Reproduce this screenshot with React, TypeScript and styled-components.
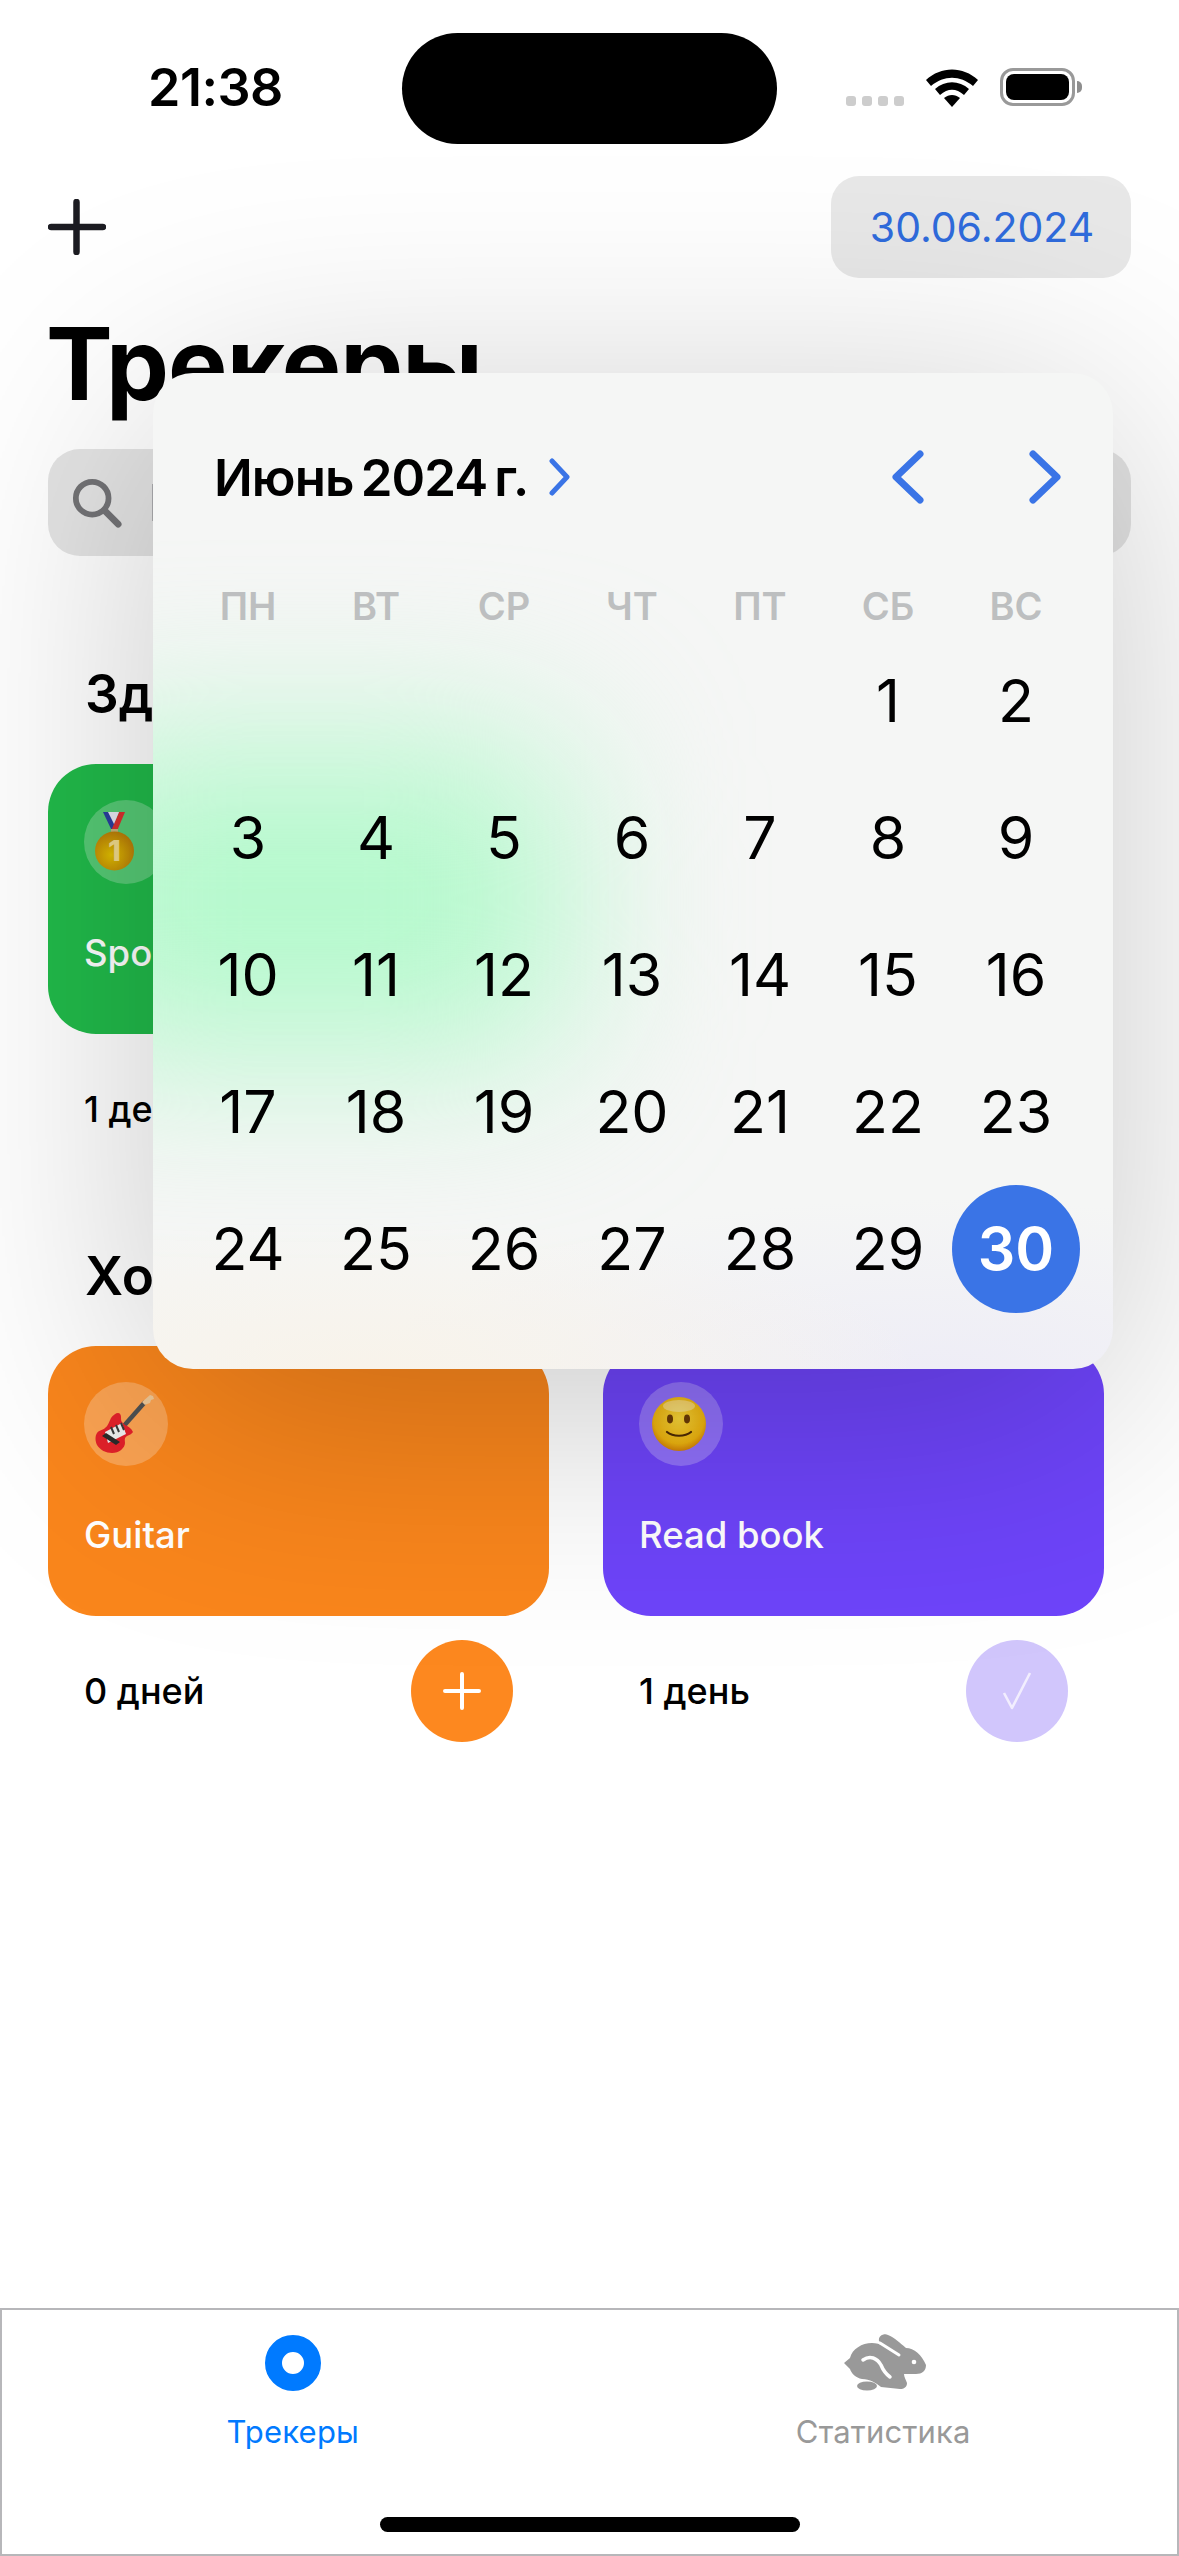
import React from "react";
import styled, { createGlobalStyle } from "styled-components";

const Global = createGlobalStyle`
  html, body { margin: 0; padding: 0; background: #fff; }
  * { box-sizing: border-box; }
`;

const Page = styled.div`
  position: relative;
  width: 1179px;
  height: 2556px;
  overflow: hidden;
  display: flex;
  flex-direction: column;
  background: #fff;
  color: #000;
  font-family: Inter, "Liberation Sans", sans-serif;
`;

const StatusBar = styled.div`
  height: 176px;
  display: grid;
  grid-template-columns: 402px 375px 1fr;
  align-items: start;
`;
const Time = styled.div`
  padding: 58px 0 0 148px;
  font-size: 52px;
  line-height: 60px;
  font-weight: 600;
  letter-spacing: -0.5px;
`;
const Island = styled.div`
  margin-top: 33px;
  height: 111px;
  border-radius: 56px;
  background: #000;
`;
const StatusIcons = styled.div`
  display: flex;
  align-items: flex-start;
  padding: 68px 0 0 69px;
`;
const Dots = styled.div`
  display: flex;
  gap: 6px;
  margin-top: 28px;
`;
const Dot = styled.span`
  width: 10px;
  height: 10px;
  border-radius: 3px;
  background: #cdcdcd;
`;
const Wifi = styled.svg`
  width: 52px;
  height: 38px;
  margin: 1px 0 0 22px;
`;
const Battery = styled.div`
  position: relative;
  width: 75px;
  height: 38px;
  margin-left: 22px;
  padding: 3px;
  border: 3px solid #999;
  border-radius: 13px;
  &::after {
    content: "";
    position: absolute;
    right: -10px;
    top: 10px;
    width: 5px;
    height: 12px;
    border-radius: 0 5px 5px 0;
    background: #8e8e8e;
  }
`;
const BatteryFill = styled.div`
  height: 100%;
  border-radius: 8px;
  background: #000;
`;

const TopRow = styled.div`
  display: flex;
  justify-content: space-between;
  align-items: center;
  padding: 0 48px;
`;
const PlusIcon = styled.svg`
  width: 58px;
  height: 56px;
  display: block;
`;
const DateChip = styled.div`
  width: 300px;
  height: 102px;
  border-radius: 28px;
  padding-left: 2px;
  background: rgba(120, 120, 120, 0.17);
  color: #2f6bdc;
  font-size: 41px;
  font-weight: 400;
  display: flex;
  align-items: center;
  justify-content: center;
`;
const Title = styled.h1`
  margin: 26px 0 0;
  padding-left: 46px;
  font-size: 100px;
  line-height: 120px;
  font-weight: 700;
  letter-spacing: -1px;
`;
const Search = styled.div`
  margin: 25px 48px 0;
  height: 107px;
  border-radius: 32px;
  background: rgba(120, 120, 120, 0.2);
  display: flex;
  align-items: center;
  gap: 26px;
  padding-left: 24px;
  color: #808085;
  font-size: 51px;
`;
const SearchIcon = styled.svg`
  width: 50px;
  height: 50px;
  flex: none;
`;
const SectionTitle = styled.h2<{ $top: number }>`
  margin: ${(p) => p.$top}px 0 40px;
  padding-left: 85px;
  font-size: 53px;
  line-height: 60px;
  font-weight: 600;
`;
const CardGrid = styled.div`
  display: grid;
  grid-template-columns: 501px 501px;
  gap: 54px;
  padding-left: 48px;
`;
const Card = styled.div<{ $color: string }>`
  height: 270px;
  border-radius: 48px;
  background: ${(p) => p.$color};
  padding: 36px;
  color: #fff;
`;
const EmojiCircle = styled.div`
  width: 84px;
  height: 84px;
  border-radius: 50%;
  background: rgba(255, 255, 255, 0.24);
`;
const EmojiSvg = styled.svg`
  display: block;
  width: 84px;
  height: 84px;
`;
const CardLabel = styled.div`
  margin-top: 47px;
  font-size: 36.5px;
  line-height: 44px;
  font-weight: 500;
`;
const CardFoot = styled.div`
  display: flex;
  justify-content: space-between;
  align-items: center;
  padding: 24px 36px 0;
  font-size: 36px;
  font-weight: 500;
`;
const RoundBtn = styled.div<{ $color: string }>`
  width: 102px;
  height: 102px;
  border-radius: 50%;
  background: ${(p) => p.$color};
  display: flex;
  align-items: center;
  justify-content: center;
`;
const BtnIcon = styled.svg`
  width: 40px;
  height: 40px;
`;

const TabBar = styled.div`
  margin-top: auto;
  height: 248px;
  border: 2px solid #b7b7ba;
  background: #fff;
  display: grid;
  grid-template-columns: 1fr 1fr;
  position: relative;
`;
const Tab = styled.div<{ $color: string; $x: number }>`
  display: flex;
  flex-direction: column;
  align-items: center;
  padding-top: 18px;
  transform: translateX(${(p) => p.$x}px);
  color: ${(p) => p.$color};
  font-size: 31px;
  letter-spacing: 0.2px;
  font-weight: 400;
`;
const TabIconBox = styled.div`
  height: 70px;
  display: flex;
  align-items: center;
  justify-content: center;
  margin-bottom: 15px;
`;
const TabDot = styled.div`
  width: 56px;
  height: 56px;
  border-radius: 50%;
  border: 17px solid #007aff;
  background: #fff;
`;
const Rabbit = styled.svg`
  width: 82px;
  height: 60px;
  margin-left: 4px;
  filter: blur(0.7px);
`;
const HomeBar = styled.div`
  position: absolute;
  left: 378px;
  bottom: 22px;
  width: 420px;
  height: 15px;
  border-radius: 8px;
  background: #000;
`;

const Popover = styled.div`
  position: absolute;
  left: 153px;
  top: 373px;
  width: 960px;
  height: 996px;
  border-radius: 40px;
  overflow: hidden;
  padding: 74px 33px 0 31px;
  background:
    radial-gradient(ellipse 560px 150px at 22% 100%, #f8f3ea, rgba(248, 243, 234, 0)),
    radial-gradient(ellipse 560px 170px at 82% 100%, #eeedf6, rgba(238, 237, 246, 0)),
    #f5f6f5;
  box-shadow: 0 40px 300px rgba(0, 0, 0, 0.22);
  &::before {
    content: "";
    position: absolute;
    left: -115px;
    top: 371px;
    width: 530px;
    height: 310px;
    border-radius: 48px;
    background: #b4f9cc;
    filter: blur(85px);
  }
`;
const CalHead = styled.div`
  position: relative;
  display: flex;
  align-items: center;
  height: 60px;
  padding: 0 18px 0 30px;
`;
const Month = styled.div`
  font-size: 51px;
  font-weight: 600;
  letter-spacing: -0.9px;
  word-spacing: -5px;
`;
const MonthChevron = styled.svg`
  width: 22px;
  height: 38px;
  margin-left: 21px;
`;
const NavGroup = styled.div`
  margin-left: auto;
  display: flex;
  gap: 105px;
`;
const NavChevron = styled.svg`
  width: 33px;
  height: 54px;
  display: block;
`;
const Week = styled.div`
  position: relative;
  display: grid;
  grid-template-columns: repeat(7, 128px);
  margin-top: 70px;
  height: 57px;
  margin-bottom: -2px;
  align-items: center;
  text-align: center;
  color: #bdbfc0;
  font-size: 38px;
  font-weight: 600;
`;
const Days = styled.div`
  position: relative;
  display: grid;
  grid-template-columns: repeat(7, 128px);
  grid-auto-rows: 137px;
`;
const Day = styled.div<{ $on?: boolean }>`
  display: flex;
  align-items: center;
  justify-content: center;
  font-size: 59px;
  font-weight: ${(p) => (p.$on ? 600 : 400)};
  color: ${(p) => (p.$on ? "#fff" : "#000")};
  & > span {
    width: 128px;
    height: 128px;
    border-radius: 50%;
    display: flex;
    align-items: center;
    justify-content: center;
    background: ${(p) => (p.$on ? "#3a74e6" : "transparent")};
  }
`;

const Medal = () => (
  <EmojiSvg viewBox="0 0 84 84">
    <defs>
      <radialGradient id="gold" cx="0.42" cy="0.6" r="0.62">
        <stop offset="0" stopColor="#e2c000" />
        <stop offset="1" stopColor="#b87c08" />
      </radialGradient>
    </defs>
    <path d="M30 12h-11l9 19h5z" fill="#2a3f9e" />
    <path d="M41 12h-6l-8 19h6z" fill="#d8302f" />
    <path d="M24 12h11l-5 12z" fill="#e8e8f2" />
    <rect x="27" y="29" width="7" height="5" fill="#c2b27a" />
    <circle cx="30.500" cy="51" r="19.500" fill="url(#gold)" />
    <text x="30.500" y="61" textAnchor="middle" fontSize="29" fontWeight="800" fill="#f0d98a" fontFamily="Inter, sans-serif">1</text>
  </EmojiSvg>
);

const Guitar = () => (
  <EmojiSvg viewBox="0 0 84 84">
    <path d="M38 46 L61 20" stroke="#4e5152" strokeWidth="4.500" />
    <path d="M58 20l8-7 3 1 1 3-3 1-1 3-3 1-2 1z" fill="#efc796" />
    <path d="M34 31c2 0 3 2 3 4 0 3 0 5 2 6 l2 2 c3 1 6 3 8 7 -1 2-4 3-6 4 -3 2-2 4-2 7 0 5-6 10-13 10 -6 0-12-3-15-8 -2-4-2-9 0-12 2-3 6-3 8-5 3-2 4-6 6-10 2-3 5-5 7-5z" fill="#e2212a" />
    <path d="M21 50l17-9 4 11-18 9z" fill="#eeeeee" />
    <path d="M18 54l4-3 14 9-4 3z" fill="#2b2b2b" />
    <path d="M27 45l3 7M32 43l3 7M37 41l3 7" stroke="#3a3a3a" strokeWidth="2" />
  </EmojiSvg>
);

const Smile = () => (
  <EmojiSvg viewBox="0 0 84 84">
    <defs>
      <radialGradient id="face" cx="0.5" cy="0.4" r="0.62">
        <stop offset="0" stopColor="#f8d63a" />
        <stop offset="0.75" stopColor="#eeb40f" />
        <stop offset="1" stopColor="#cf7a05" />
      </radialGradient>
    </defs>
    <circle cx="40" cy="42" r="27" fill="url(#face)" />
    <ellipse cx="40" cy="24" rx="16" ry="6" fill="#fff" opacity="0.35" />
    <ellipse cx="31" cy="37" rx="3" ry="4.400" fill="#6b3b06" />
    <ellipse cx="48" cy="37" rx="3" ry="4.400" fill="#6b3b06" />
    <path d="M28 50c6 5 18 5 24 0" fill="none" stroke="#4f2b05" strokeWidth="2.200" strokeLinecap="round" />
  </EmojiSvg>
);

const PlusGlyph = ({ w }: { w: number }) => (
  <BtnIcon viewBox="0 0 40 40">
    <path d="M20 3v34M3 20h34" stroke="#fff" strokeWidth={w} strokeLinecap="round" fill="none" />
  </BtnIcon>
);

const days: (number | null)[] = [null, null, null, null, null, ...Array.from({ length: 30 }, (_, i) => i + 1)];

export default function App() {
  return (
    <Page>
      <Global />
      <StatusBar>
        <Time>21:38</Time>
        <Island />
        <StatusIcons>
          <Dots><Dot /><Dot /><Dot /><Dot /></Dots>
          <Wifi viewBox="0 0 52 38">
            <path d="M0 11 C15 -3 37 -3 52 11 L47 17 C34 6 18 6 5 17Z" fill="#000" />
            <path d="M9 20 C19 11 33 11 43 20 L38 26 C30 19 22 19 14 26Z" fill="#000" />
            <path d="M18 29 C23 25 29 25 34 29 L26 38Z" fill="#000" />
          </Wifi>
          <Battery><BatteryFill /></Battery>
        </StatusIcons>
      </StatusBar>

      <TopRow>
        <PlusIcon viewBox="0 0 58 56">
          <path d="M28.500 3v50M3 28h52" stroke="#1c1c22" strokeWidth="6.500" strokeLinecap="round" />
        </PlusIcon>
        <DateChip>30.06.2024</DateChip>
      </TopRow>

      <Title>Трекеры</Title>

      <Search>
        <SearchIcon viewBox="0 0 52 52">
          <circle cx="21" cy="21" r="17" fill="none" stroke="#737376" strokeWidth="6" />
          <path d="M34 34l14 14" stroke="#737376" strokeWidth="7" strokeLinecap="round" />
        </SearchIcon>
        Поиск
      </Search>

      <SectionTitle $top={108}>Здоровье</SectionTitle>
      <CardGrid>
        <div>
          <Card $color="#21ba4a">
            <EmojiCircle><Medal /></EmojiCircle>
            <CardLabel>Sport</CardLabel>
          </Card>
          <CardFoot>
            1 день
            <RoundBtn $color="#21ba4a"><PlusGlyph w={4} /></RoundBtn>
          </CardFoot>
        </div>
      </CardGrid>

      <SectionTitle $top={86}>Хобби</SectionTitle>
      <CardGrid>
        <div>
          <Card $color="#fa861c">
            <EmojiCircle><Guitar /></EmojiCircle>
            <CardLabel>Guitar</CardLabel>
          </Card>
          <CardFoot>
            0 дней
            <RoundBtn $color="#fd881f"><PlusGlyph w={4} /></RoundBtn>
          </CardFoot>
        </div>
        <div>
          <Card $color="#6e44fa">
            <EmojiCircle><Smile /></EmojiCircle>
            <CardLabel>Read book</CardLabel>
          </Card>
          <CardFoot>
            1 день
            <RoundBtn $color="#d1c6fc">
              <BtnIcon viewBox="0 0 40 40">
                <path d="M7 22l8 15L33 2" stroke="#f2eefe" strokeWidth="2.600" fill="none" strokeLinejoin="round" />
              </BtnIcon>
            </RoundBtn>
          </CardFoot>
        </div>
      </CardGrid>

      <TabBar>
        <Tab $color="#007aff" $x={-3}>
          <TabIconBox><TabDot /></TabIconBox>
          Трекеры
        </Tab>
        <Tab $color="#999999" $x={0}>
          <TabIconBox>
            <Rabbit viewBox="0 0 82 60">
              <path d="M0 30 L6 25 C8 16 18 10 28 10 C32 10 36 11 40 13 L35 8 C34 3 40 0 44 2 C50 4 56 10 62 15 C70 15 78 22 82 32 C82 38 78 41 72 41 L60 41 C60 44 62 47 63 50 C63 54 60 56 56 56 L37 54 C32 50 26 46 18 46 C12 45 7 40 6 36Z" fill="#999" />
              <path d="M19 27 C26 22 33 25 37 32 C39 37 42 41 46 44" fill="none" stroke="#fff" strokeWidth="3.500" strokeLinecap="round" />
              <path d="M36 10 L55 22" fill="none" stroke="#fff" strokeWidth="3" strokeLinecap="round" />
              <circle cx="70" cy="29" r="2.300" fill="#fff" />
              <ellipse cx="23" cy="53" rx="10" ry="4.500" fill="#999" />
            </Rabbit>
          </TabIconBox>
          Статистика
        </Tab>
        <HomeBar />
      </TabBar>

      <Popover>
        <CalHead>
          <Month>Июнь 2024 г.</Month>
          <MonthChevron viewBox="0 0 22 38">
            <path d="M3 3l15 16L3 35" stroke="#3a74e6" strokeWidth="5" fill="none" strokeLinecap="round" strokeLinejoin="round" />
          </MonthChevron>
          <NavGroup>
            <NavChevron viewBox="0 0 33 54">
              <path d="M29 4L5 27l24 23" stroke="#3a74e6" strokeWidth="7" fill="none" strokeLinecap="round" strokeLinejoin="round" />
            </NavChevron>
            <NavChevron viewBox="0 0 33 54">
              <path d="M4 4l24 23L4 50" stroke="#3a74e6" strokeWidth="7" fill="none" strokeLinecap="round" strokeLinejoin="round" />
            </NavChevron>
          </NavGroup>
        </CalHead>
        <Week>
          {["ПН", "ВТ", "СР", "ЧТ", "ПТ", "СБ", "ВС"].map((d) => (
            <div key={d}>{d}</div>
          ))}
        </Week>
        <Days>
          {days.map((d, i) => (
            <Day key={i} $on={d === 30}>
              {d && <span>{d}</span>}
            </Day>
          ))}
        </Days>
      </Popover>
    </Page>
  );
}
